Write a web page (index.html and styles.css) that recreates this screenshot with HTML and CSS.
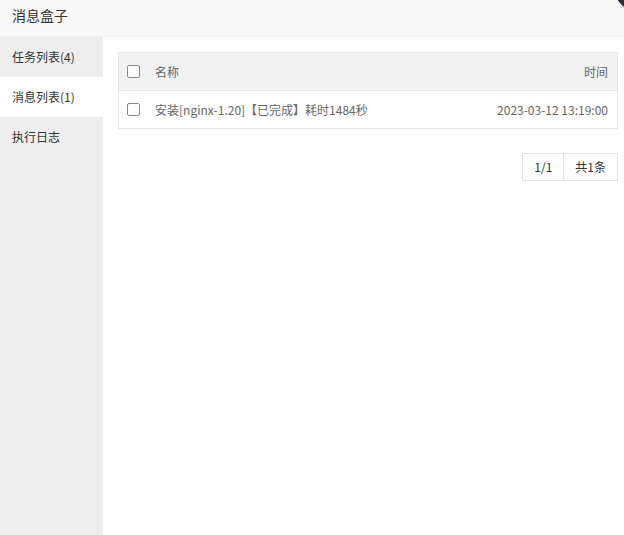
FILE: index.html
```html
<!DOCTYPE html>
<html lang="zh-CN">
<head>
  <meta charset="UTF-8">
  <title>消息盒子</title>
  <link rel="stylesheet" href="styles.css">
</head>
<body>
  <div class="layer">
    <div class="layer-title">消息盒子</div>
    <span class="layer-close"></span>

    <div class="layer-body">
      <ul class="side-tabs">
        <li>任务列表(4)</li>
        <li class="active">消息列表(1)</li>
        <li>执行日志</li>
      </ul>

      <div class="tab-content">
        <table class="msg-table">
          <thead>
            <tr>
              <th class="col-check"><span class="checkbox"></span></th>
              <th>名称</th>
              <th class="col-time">时间</th>
            </tr>
          </thead>
          <tbody>
            <tr>
              <td class="col-check"><span class="checkbox"></span></td>
              <td>安装[nginx-1.20]【已完成】耗时1484秒</td>
              <td class="col-time">2023-03-12 13:19:00</td>
            </tr>
          </tbody>
        </table>

        <div class="pager">
          <span>1/1</span>
          <span>共1条</span>
        </div>
      </div>
    </div>
  </div>
</body>
</html>
```

FILE: styles.css
```css
/* Base */
html, body {
  margin: 0;
  padding: 0;
  height: 100%;
}

body {
  font-family: "Noto Sans CJK SC", "Noto Sans", sans-serif;
  font-size: 12px;
  color: #333;
  background-color: #fff;
  overflow: hidden;
}

.layer {
  position: relative;
  display: flex;
  flex-direction: column;
  height: 535px;
}

/* Title bar */
.layer-title {
  height: 36px;
  line-height: 30px;
  padding: 0 12px;
  font-size: 14px;
  color: #333;
  background-color: #f8f8f8;
  border-bottom: 1px solid #eee;
}

/* close button, only its lower-left edge shows in the corner */
.layer-close {
  position: absolute;
  top: 0;
  right: 0;
  width: 8px;
  height: 13px;
  background: radial-gradient(circle at 24px -14px, #2e2d3c 26px, transparent 26.6px);
}

.layer-body {
  display: flex;
  flex: 1;
}

/* Left tabs */
.side-tabs {
  list-style: none;
  margin: 0;
  padding: 0;
  width: 103px;
  background-color: #eee;
}

.side-tabs li {
  height: 40px;
  line-height: 40px;
  padding-left: 12px;
  color: #333;
  cursor: pointer;
}

.side-tabs li.active {
  background-color: #fff;
}

/* Content */
.tab-content {
  flex: 1;
  padding: 15px 6px 0 15px;
}

.msg-table {
  width: 100%;
  border-collapse: collapse;
  border: 1px solid #e6e6e6;
  color: #666;
}

.msg-table th,
.msg-table td {
  height: 37px;
  padding: 0 10px 0 0;
  font-weight: normal;
  text-align: left;
  white-space: nowrap;
}

.msg-table thead tr {
  background-color: #f2f2f2;
}

.msg-table tbody td {
  border-top: 1px solid #e6e6e6;
}

.msg-table .col-check {
  width: 28px;
  padding: 0 0 0 8px;
}

.msg-table .col-time {
  text-align: right;
  padding-right: 9px;
}

.checkbox {
  display: block;
  width: 11px;
  height: 11px;
  border: 1px solid #888;
  border-radius: 2px;
  background-color: #fff;
}

/* Pagination */
.pager {
  display: flex;
  justify-content: flex-end;
  margin-top: 24px;
}

.pager span {
  height: 26px;
  line-height: 26px;
  padding: 0 11px;
  border: 1px solid #e2e2e2;
  color: #333;
  background-color: #fff;
}

.pager span + span {
  border-left: none;
}
```
